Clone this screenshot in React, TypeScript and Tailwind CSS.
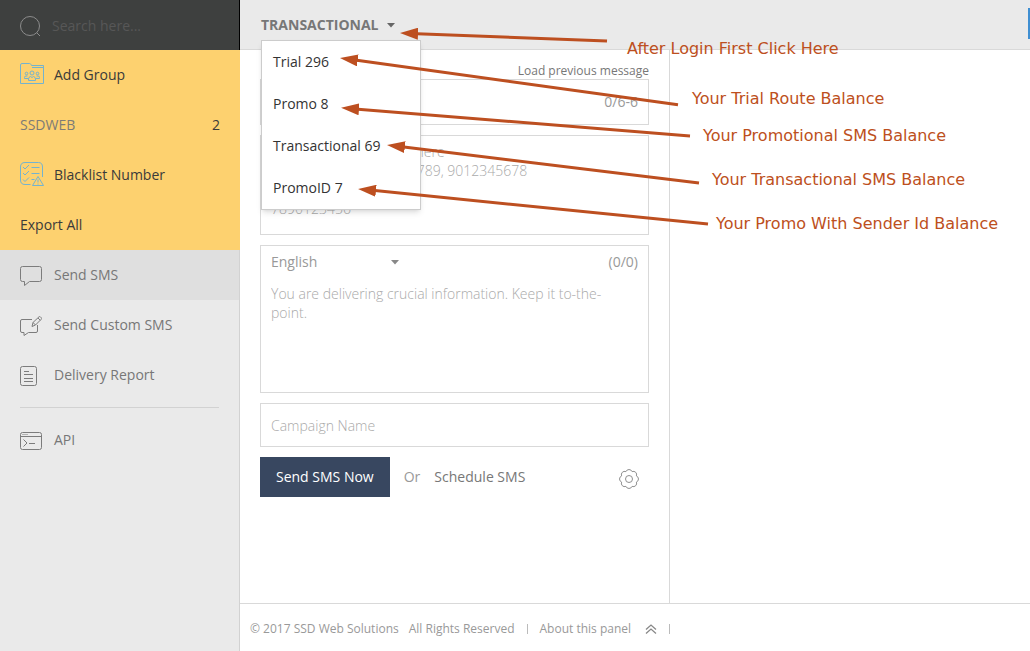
import { useState } from 'react'
import type { ReactNode } from 'react'

const ROUTES = ['Trial 296', 'Promo 8', 'Transactional 69', 'PromoID 7']

// x1/y1 is the tail, x2/y2 is where the arrow head starts
const ARROWS = [
  { x1: 607, y1: 41, x2: 417, y2: 33.7 },
  { x1: 678, y1: 104.7, x2: 356.8, y2: 60.3 },
  { x1: 690, y1: 136, x2: 358, y2: 109.2 },
  { x1: 699, y1: 183, x2: 403.9, y2: 147 },
  { x1: 708, y1: 224, x2: 375, y2: 190.6 },
]

const NUMBERS_HINT =
  'Enter mobile numbers here\nFor example - 8901236789, 9012345678\nOR\n7890123456'

function SearchIcon() {
  return (
    <svg width="22" height="22" viewBox="0 0 22 22" fill="none" stroke="#8c8c8c" aria-hidden="true">
      <circle cx="10" cy="11" r="9.5" />
      <path d="M16.700 17.700l3.300 3.300" />
    </svg>
  )
}

function GroupIcon() {
  return (
    <svg width="24" height="22" viewBox="0 0 24 22" fill="none" stroke="#74b3cf" aria-hidden="true">
      <path d="M.5 20.5V2Q.5.5 2 .5h7.5q1 0 1.500 1l.5 1h12v18z" />
      <path d="M12 4.500h11" />
      <circle cx="12" cy="10" r="2" />
      <circle cx="6.500" cy="10.500" r="1.300" />
      <circle cx="17.500" cy="10.500" r="1.300" />
      <path d="M8.500 17.500v-1.500q0-2 2-2.500l1.500 1 1.500-1q2 .5 2 2.500v1.500zM8 15.500H4.500v-1q0-1.500 1.500-1.500h1.500M16 15.500h3.500v-1q0-1.500-1.500-1.500h-1.500" />
    </svg>
  )
}

function BlacklistIcon() {
  return (
    <svg width="24" height="24" viewBox="0 0 24 24" fill="none" stroke="#74b3cf" aria-hidden="true">
      <path d="M10.500 22.500H5Q.5 22.500.5 18V5Q.5.500 5 .5h13.500Q22.500.5 22.500 5v10" />
      <path d="M3 5l2 2 4-4M3 11l2 2 4-4M3 17.500l2 2 4-4M11.500 5.500h8M11.500 11.500h8M11.500 17.500h3" />
      <path d="M18 14.500l5.500 9h-11zM18 17.500v3M18 21.500v1" strokeLinejoin="round" />
    </svg>
  )
}

function ChatIcon() {
  return (
    <svg width="22" height="20" viewBox="0 0 22 20" fill="none" stroke="#7c7c7c" aria-hidden="true">
      <path d="M2.500.5h17q2 0 2 2v11q0 2-2 2H9.500L4.500 19.500v-4h-2q-2 0-2-2v-11q0-2 2-2z" />
    </svg>
  )
}

function ChatEditIcon() {
  return (
    <svg width="22" height="20" viewBox="0 0 22 20" fill="none" stroke="#7c7c7c" aria-hidden="true">
      <path d="M12 3.500H2q-1.500 0-1.500 1.500v10q0 1.500 1.500 1.500h2v3l4.500-3H16q1.500 0 1.500-1.500V9" />
      <path d="M12 10.500l1-4L19 .8q.7-.5 1.300 0l1 1q.7.700 0 1.400L15.500 9zM13 6.500L15.500 9M18 2l2.300 2.300" />
    </svg>
  )
}

function ReportIcon() {
  return (
    <svg width="18" height="20" viewBox="0 0 18 20" fill="none" stroke="#7c7c7c" aria-hidden="true">
      <rect x=".5" y=".5" width="16" height="19" rx="2" />
      <path d="M4 5.500h5M4 8.500h9M4 12.500h9M4 15.500h9" />
    </svg>
  )
}

function TerminalIcon() {
  return (
    <svg width="23" height="18" viewBox="0 0 23 18" fill="none" stroke="#7c7c7c" aria-hidden="true">
      <rect x=".5" y=".5" width="21" height="17" rx="2" />
      <path d="M.5 4.500h21M2.500 2.500h1M4.500 2.500h1M6.500 2.500h1M3.500 7.500L7 11l-3.500 3.500M9 11.500h6" />
    </svg>
  )
}

function GearIcon() {
  return (
    <svg width="20" height="20" viewBox="0 0 20 20" fill="none" stroke="#8f8f8f" aria-hidden="true">
      <path
        d="M6.940 2.610A3.300 3.300 0 0 1 13.060 2.610A3.300 3.300 0 0 1 17.390 6.940A3.300 3.300 0 0 1 17.390 13.060A3.300 3.300 0 0 1 13.060 17.390A3.300 3.300 0 0 1 6.940 17.390A3.300 3.300 0 0 1 2.610 13.060A3.300 3.300 0 0 1 2.610 6.940A3.300 3.300 0 0 1 6.940 2.610z"
        strokeLinejoin="round"
      />
      <circle cx="10" cy="10" r="3.500" />
    </svg>
  )
}

function Caret({ className }: { className?: string }) {
  return (
    <svg width="8" height="5" viewBox="0 0 8 5" fill="currentColor" className={className} aria-hidden="true">
      <path d="M0 0h8L4 4.500z" />
    </svg>
  )
}

function SideLink({ icon, active, children }: { icon: ReactNode; active?: boolean; children: ReactNode }) {
  return (
    <a
      href="#"
      className={
        active
          ? 'flex h-[50px] items-center bg-[#dfdfdf] px-5 text-[#777]'
          : 'flex h-[50px] items-center px-5 text-[#777]'
      }
    >
      <span className="w-[34px] shrink-0 pt-0.5">{icon}</span>
      {children}
    </a>
  )
}

function Sidebar() {
  return (
    <aside className="flex w-60 shrink-0 flex-col bg-[#eaeaea]">
      <label className="flex h-[50px] items-center border-r border-black bg-[#3e403f] px-5 pt-0.5">
        <span className="w-8 shrink-0">
          <SearchIcon />
        </span>
        <input
          type="search"
          aria-label="Search"
          placeholder="Search here..."
          className="w-full min-w-0 bg-transparent text-white outline-none placeholder:text-[#575757]"
        />
      </label>

      {/* Groups */}
      <div className="bg-[#fdd16f] text-[#3a3a3a]">
        <a href="#" className="flex h-[50px] items-center px-5">
          <span className="w-[34px] shrink-0 pb-0.5">
            <GroupIcon />
          </span>
          Add Group
        </a>
        <a href="#" className="flex h-[50px] items-center justify-between px-5">
          <span className="text-[#7d7b76]">SSDWEB</span>
          <span>2</span>
        </a>
        <a href="#" className="flex h-[50px] items-center px-5">
          <span className="w-[34px] shrink-0 pb-0.5">
            <BlacklistIcon />
          </span>
          Blacklist Number
        </a>
        <a href="#" className="flex h-[50px] items-center px-5">
          Export All
        </a>
      </div>

      <nav className="grow border-r border-[#d2d2d2]">
        <SideLink icon={<ChatIcon />} active>
          Send SMS
        </SideLink>
        <SideLink icon={<ChatEditIcon />}>Send Custom SMS</SideLink>
        <SideLink icon={<ReportIcon />}>Delivery Report</SideLink>
        <hr className="mx-5 my-[7px] border-[#d2d2d2]" />
        <SideLink icon={<TerminalIcon />}>API</SideLink>
      </nav>
    </aside>
  )
}

function RouteMenu() {
  const [open, setOpen] = useState(true)

  return (
    <div className="relative">
      <button
        type="button"
        aria-expanded={open}
        onClick={() => setOpen(!open)}
        className="flex h-10 items-center gap-2 pt-[10px] font-bold text-[#777]"
      >
        TRANSACTIONAL
        <Caret className="text-[#666]" />
      </button>
      {open && (
        <ul className="absolute top-full left-0 z-10 w-40 border border-[#ccc] bg-white text-[#333] shadow-md">
          {ROUTES.map((route) => (
            <li key={route}>
              <button type="button" className="block h-[42px] w-full px-[11px] text-left">
                {route}
              </button>
            </li>
          ))}
        </ul>
      )}
    </div>
  )
}

function SmsForm() {
  return (
    <form className="flex w-[430px] shrink-0 flex-col gap-[10px] border-r border-[#d9d9d9] px-5 text-[#999]">
      <div>
        <div className="flex h-[29px] items-end justify-end">
          <a href="#" className="text-xs leading-4 text-[#777]">
            Load previous message
          </a>
        </div>
        <div className="flex h-[46px] items-center border border-[#d9d9d9] px-[10px]">
          <input type="text" aria-label="Sender ID" className="w-full min-w-0 outline-none" />
          <span className="whitespace-nowrap">0/6-6</span>
        </div>
      </div>

      <textarea
        aria-label="Mobile numbers"
        placeholder={NUMBERS_HINT}
        className="block h-[100px] w-full resize-none border border-[#d9d9d9] px-[10px] py-[6px] leading-[19px] font-light outline-none placeholder:text-[#aaa]"
      />

      <div className="border border-[#d9d9d9] px-[10px]">
        <div className="flex h-8 items-center justify-between">
          <div className="relative flex w-32 items-center">
            <select aria-label="Language" className="w-full appearance-none bg-transparent outline-none">
              <option>English</option>
              <option>Unicode</option>
            </select>
            <Caret className="pointer-events-none absolute right-0 text-[#888]" />
          </div>
          <span>(0/0)</span>
        </div>
        <textarea
          aria-label="Message"
          placeholder="You are delivering crucial information. Keep it to-the-point."
          className="block h-[114px] w-full resize-none py-[6px] pr-5 leading-[19px] font-light outline-none placeholder:text-[#aaa]"
        />
      </div>

      <input
        type="text"
        aria-label="Campaign name"
        placeholder="Campaign Name"
        className="h-11 w-full border border-[#d9d9d9] px-[10px] font-light outline-none placeholder:text-[#aaa]"
      />

      <div className="flex items-center">
        <button type="button" className="h-10 bg-[#384760] px-4 text-white">
          Send SMS Now
        </button>
        <span className="ml-[14px]">Or</span>
        <a href="#" className="ml-[14px] text-[#777]">
          Schedule SMS
        </a>
        <button type="button" aria-label="Settings" className="mr-[10px] ml-auto pt-1">
          <GearIcon />
        </button>
      </div>
    </form>
  )
}

function Footer() {
  return (
    <footer className="flex h-12 items-center border-t border-[#d9d9d9] px-[10px] pt-0.5 text-xs text-[#999]">
      <span>© 2017 SSD Web Solutions</span>
      <span className="ml-[10px]">All Rights Reserved</span>
      <span className="mx-3 h-[10px] w-px bg-[#bbb]" />
      <a href="#" className="flex items-center gap-[14px]">
        About this panel
        <svg width="12" height="10" viewBox="0 0 12 10" fill="none" stroke="#888" strokeWidth="1.300" aria-hidden="true">
          <path d="M1 5.500l5-4.500 5 4.500M1 9.500L6 5l5 4.500" />
        </svg>
      </a>
      <span className="mx-3 h-[10px] w-px bg-[#bbb]" />
    </footer>
  )
}

// Help arrows and captions lie over the whole panel
function HelpOverlay() {
  return (
    <div className="pointer-events-none absolute inset-0 z-20 overflow-hidden font-['DejaVu_Sans',sans-serif] text-base leading-5 whitespace-nowrap text-[#bd4f20]">
      <svg className="absolute inset-0 h-full w-full" stroke="currentColor" strokeWidth="3" aria-hidden="true">
        <defs>
          <marker id="head" markerUnits="userSpaceOnUse" markerWidth="18" markerHeight="12" refX="1" refY="6" orient="auto">
            <path d="M0 0L18 6L0 12z" fill="#bd4f20" stroke="none" />
          </marker>
        </defs>
        {ARROWS.map((a) => (
          <line key={a.y1} x1={a.x1} y1={a.y1} x2={a.x2} y2={a.y2} markerEnd="url(#head)" />
        ))}
      </svg>
      <span className="absolute top-[39px] left-[627px]">After Login First Click Here</span>
      <span className="absolute top-[89px] left-[692px]">Your Trial Route Balance</span>
      <span className="absolute top-[126px] left-[703px]">Your Promotional SMS Balance</span>
      <span className="absolute top-[170px] left-[712px]">Your Transactional SMS Balance</span>
      <span className="absolute top-[214px] left-[716px]">Your Promo With Sender Id Balance</span>
    </div>
  )
}

export default function App() {
  return (
    <div className="relative flex min-h-screen bg-white font-['Open_Sans',sans-serif] text-sm">
      <Sidebar />
      <div className="flex min-w-0 grow flex-col">
        <header className="flex h-[50px] items-start justify-between border-b border-[#d9d9d9] bg-[#eaeaea] pl-[21px]">
          <RouteMenu />
          <span className="mt-2 h-[31px] w-[2px] bg-[#3f8fd2]" />
        </header>
        <main className="flex grow">
          <SmsForm />
        </main>
        <Footer />
      </div>
      <HelpOverlay />
    </div>
  )
}
